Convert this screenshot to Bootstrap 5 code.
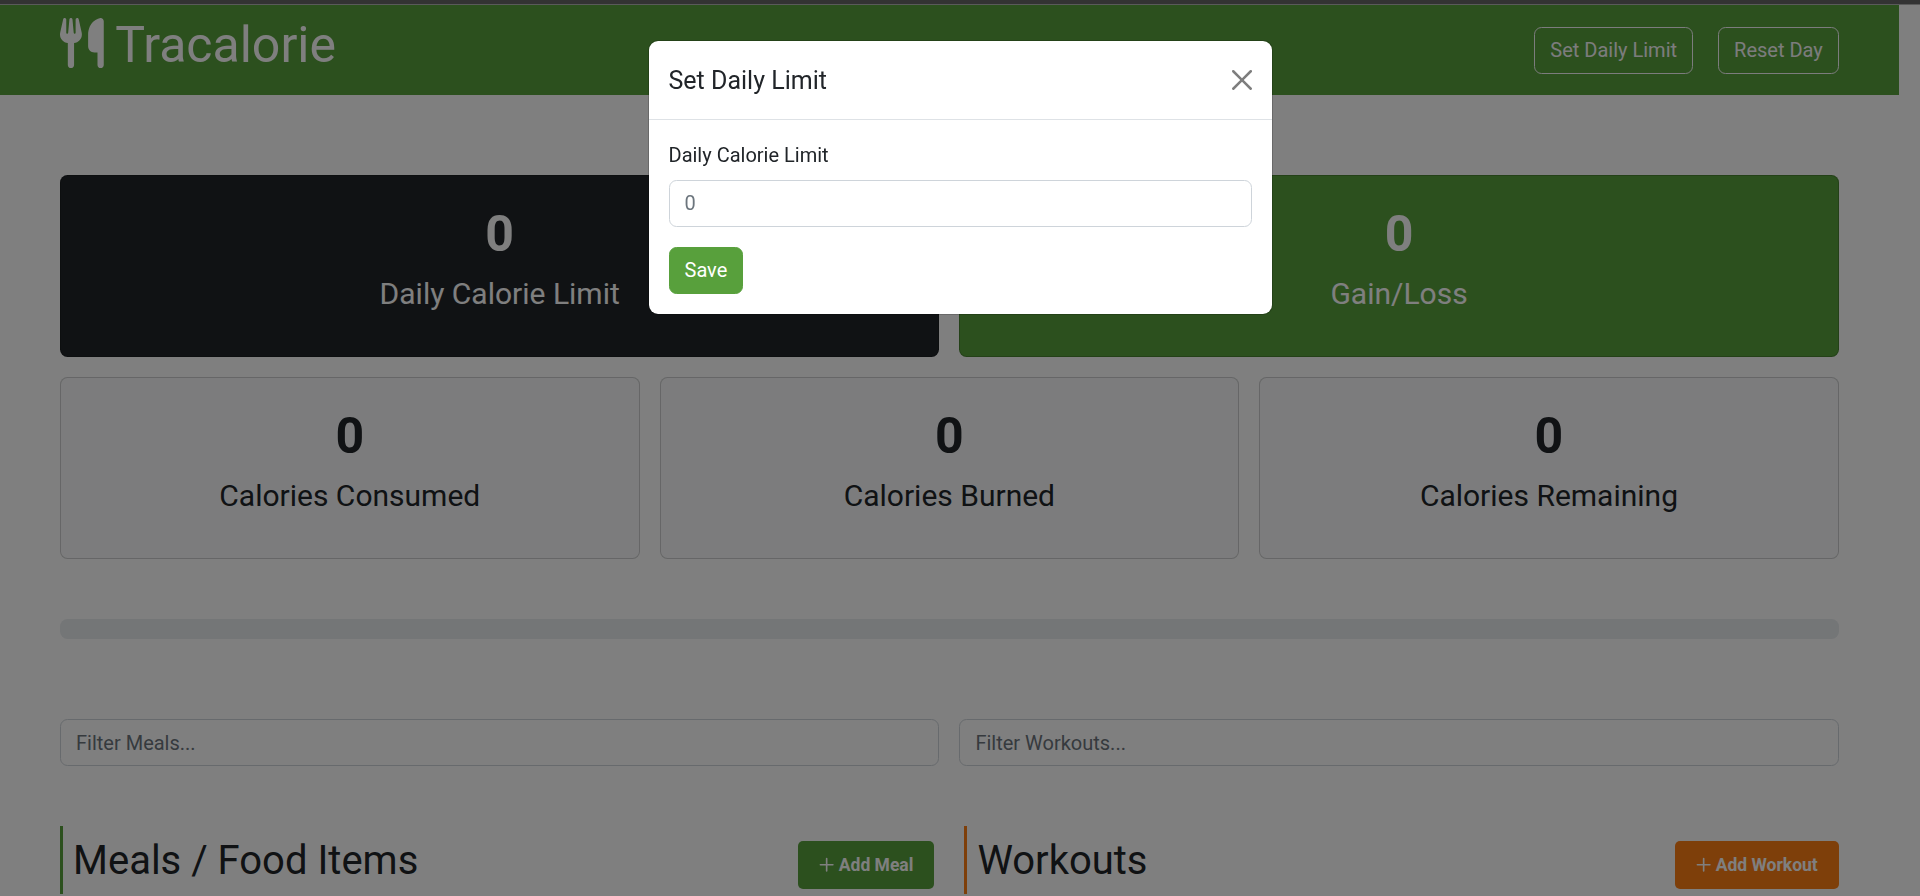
<!DOCTYPE html>
<html lang="en">
<head>
<meta charset="utf-8">
<title>Tracalorie</title>
<link href="https://cdn.jsdelivr.net/npm/bootstrap@5.3.0/dist/css/bootstrap.min.css" rel="stylesheet">
<style>
:root{font-size:20px;--brand:#58a03c;--orange:#fd7e14}
body{font-family:Roboto,"Liberation Sans",sans-serif;color:#212529;overflow:hidden;height:896px;background:#fff}
.top-strip{height:5px;background:#666;border-bottom:1px solid #b4b4b4}
.page-area{padding-right:21.25px}
.bg-brand{background:var(--brand)!important}
.topbar{height:90px;padding:0 60px}
.top-actions{gap:25px}
.brand-name{font-size:50px;line-height:60px;margin-top:-11px}
.brand-name svg{width:43.75px;height:50px;vertical-align:-6.25px}
.main-area{padding:80px 60px 0}
.form-control{border-color:#ced4da;border-radius:7.5px;height:47px}
.form-control::placeholder{color:#6c757d}
.btn{border-radius:7.5px}
.stat{border-radius:7.5px;height:182px}
.stat-num{font-size:50px;font-weight:700;line-height:75px;padding-top:1px;margin-bottom:-1px}
.stat-label{font-size:30px;line-height:45px}
.progress{height:20px;border-radius:7.5px;background:#e9ecef;margin-top:60px}
.block-gap{margin-top:60px}
.section-title{font-size:40px;line-height:48px;padding:11px 0 9px 10px;border-left:3px solid var(--brand);height:68px}
.section-title.workouts{border-color:var(--orange)}
.btn-add{height:48px;margin-top:15px;border-radius:5px;font-size:17.5px;font-weight:700;padding:0 21px;border:0;color:#fff}
.btn-add svg{width:15.3px;height:17.5px;vertical-align:-2.2px}
.btn-brand,.btn-brand:hover{background:var(--brand);color:#fff;border-color:var(--brand)}
.btn-orange,.btn-orange:hover{background:var(--orange);color:#fff}
.modal-dialog{max-width:625px;margin-top:40px}
.modal-content{border-radius:10px}
.modal-title{line-height:37.5px;font-weight:400;padding-top:1px;margin-bottom:-1px}
.modal-header{border-color:#dee2e6}
</style>
</head>
<body>
<div class="top-strip"></div>
<div class="page-area">
  <nav class="topbar bg-brand d-flex align-items-center justify-content-between text-white">
    <div class="brand-name"><svg viewBox="0 0 448 512" fill="currentColor"><path d="M416 0C400 0 288 32 288 176V288c0 35.3 28.7 64 64 64h32V480c0 17.7 14.3 32 32 32s32-14.3 32-32V352 240 32c0-17.7-14.3-32-32-32zM64 16C64 7.8 57.9 1 49.7 .1S34.2 4.6 32.4 12.5L2.1 148.8C.7 155.1 0 161.5 0 167.9c0 45.9 35.1 83.6 80 87.7V480c0 17.7 14.3 32 32 32s32-14.3 32-32V255.6c44.9-4.1 80-41.8 80-87.7c0-6.4-.7-12.8-2.1-19.1L191.6 12.5c-1.8-8-9.3-13.3-17.4-12.4S160 7.8 160 16V150.2c0 5.4-4.4 9.8-9.8 9.8c-5.1 0-9.3-3.9-9.8-9L127.9 14.6C127.2 6.3 120.3 0 112 0s-15.2 6.3-15.9 14.6L83.7 151c-.5 5.1-4.7 9-9.8 9c-5.4 0-9.8-4.4-9.8-9.8V16z"/></svg> Tracalorie</div>
    <div class="d-flex top-actions">
      <button class="btn btn-outline-light">Set Daily Limit</button>
      <button class="btn btn-outline-light">Reset Day</button>
    </div>
  </nav>
  <main class="main-area">
    <div class="row g-3 text-center">
      <div class="col-6"><div class="card stat text-bg-dark"><div class="card-body"><div class="stat-num">0</div><div class="stat-label">Daily Calorie Limit</div></div></div></div>
      <div class="col-6"><div class="card stat bg-brand text-white"><div class="card-body"><div class="stat-num">0</div><div class="stat-label">Gain/Loss</div></div></div></div>
      <div class="col-4"><div class="card stat bg-light"><div class="card-body"><div class="stat-num">0</div><div class="stat-label">Calories Consumed</div></div></div></div>
      <div class="col-4"><div class="card stat bg-light"><div class="card-body"><div class="stat-num">0</div><div class="stat-label">Calories Burned</div></div></div></div>
      <div class="col-4"><div class="card stat bg-light"><div class="card-body"><div class="stat-num">0</div><div class="stat-label">Calories Remaining</div></div></div></div>
    </div>
    <div class="progress"></div>
    <div class="block-gap pt-3"><div class="row g-3 mt-0">
      <div class="col-6 mt-0"><input class="form-control" placeholder="Filter Meals..."></div>
      <div class="col-6 mt-0"><input class="form-control" placeholder="Filter Workouts..."></div>
    </div></div>
    <div class="row block-gap">
      <div class="col-6 d-flex justify-content-between align-items-start">
        <h2 class="section-title mb-0 fw-normal">Meals / Food Items</h2>
        <button class="btn btn-add btn-brand"><svg viewBox="0 0 448 512" fill="currentColor"><path d="M248 72c0-13.300-10.700-24-24-24s-24 10.700-24 24v160H40c-13.300 0-24 10.700-24 24s10.700 24 24 24h160v160c0 13.300 10.700 24 24 24s24-10.700 24-24V280h160c13.300 0 24-10.700 24-24s-10.700-24-24-24H248V72z"/></svg> Add Meal</button>
      </div>
      <div class="col-6 d-flex justify-content-between align-items-start">
        <h2 class="section-title workouts mb-0 fw-normal">Workouts</h2>
        <button class="btn btn-add btn-orange"><svg viewBox="0 0 448 512" fill="currentColor"><path d="M248 72c0-13.300-10.700-24-24-24s-24 10.700-24 24v160H40c-13.300 0-24 10.700-24 24s10.700 24 24 24h160v160c0 13.300 10.700 24 24 24s24-10.700 24-24V280h160c13.300 0 24-10.700 24-24s-10.700-24-24-24H248V72z"/></svg> Add Workout</button>
      </div>
    </div>
  </main>
</div>
<div class="modal-backdrop show"></div>
<div class="modal d-block" tabindex="-1">
  <div class="modal-dialog">
    <div class="modal-content">
      <div class="modal-header"><h5 class="modal-title">Set Daily Limit</h5><button class="btn-close" aria-label="Close"></button></div>
      <div class="modal-body">
        <label class="form-label">Daily Calorie Limit</label>
        <input class="form-control mb-3" placeholder="0">
        <button class="btn btn-brand">Save</button>
      </div>
    </div>
  </div>
</div>
<script src="https://cdn.jsdelivr.net/npm/bootstrap@5.3.0/dist/js/bootstrap.bundle.min.js"></script>
</body>
</html>
